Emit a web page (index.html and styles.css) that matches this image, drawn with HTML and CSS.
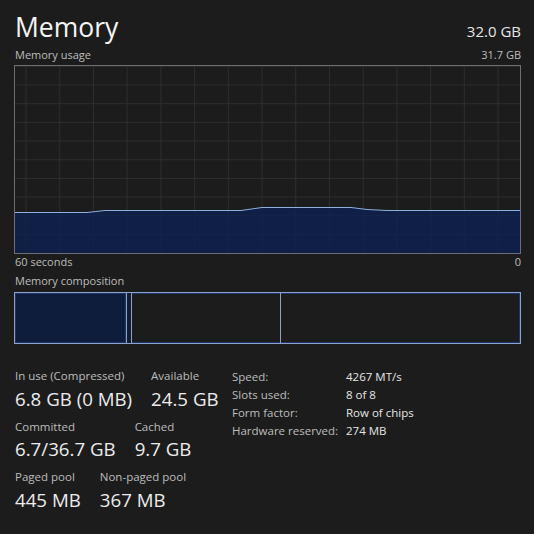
FILE: index.html
```html
<!DOCTYPE html>
<html>
<head>
<meta charset="utf-8">
<link rel="stylesheet" href="styles.css">
</head>
<body>
<div class="page">
  <div class="header">
    <div class="title">Memory</div>
    <div class="total">32.0 GB</div>
  </div>
  <div class="caption">
    <span>Memory usage</span>
    <span>31.7 GB</span>
  </div>
  <div class="graph">
    <svg class="chart" viewBox="0 0 505 187" preserveAspectRatio="none" width="505" height="187">
      <polygon class="area" points="0,146.5 72,146.5 90,144.5 226,144.5 247,141.5 336,141.5 352,143.5 372,144.5 505,144.5 505,187 0,187"/>
      <polyline class="line" points="0,146.5 72,146.5 90,144.5 226,144.5 247,141.5 336,141.5 352,143.5 372,144.5 505,144.5"/>
    </svg>
  </div>
  <div class="caption axis">
    <span>60 seconds</span>
    <span>0</span>
  </div>
  <div class="caption comp-title">
    <span>Memory composition</span>
  </div>
  <div class="composition">
    <div class="seg inuse"></div>
    <div class="seg modified"></div>
    <div class="seg standby"></div>
    <div class="seg free"></div>
  </div>
  <div class="stats">
    <div class="left">
      <div class="row">
        <div class="stat"><div class="label">In use (Compressed)</div><div class="value">6.8 GB (0 MB)</div></div>
        <div class="stat"><div class="label">Available</div><div class="value">24.5 GB</div></div>
      </div>
      <div class="row">
        <div class="stat"><div class="label">Committed</div><div class="value">6.7/36.7 GB</div></div>
        <div class="stat"><div class="label">Cached</div><div class="value">9.7 GB</div></div>
      </div>
      <div class="row">
        <div class="stat"><div class="label">Paged pool</div><div class="value">445 MB</div></div>
        <div class="stat"><div class="label">Non-paged pool</div><div class="value">367 MB</div></div>
      </div>
    </div>
    <div class="right">
      <div class="k">Speed:</div><div class="v">4267 MT/s</div>
      <div class="k">Slots used:</div><div class="v">8 of 8</div>
      <div class="k">Form factor:</div><div class="v">Row of chips</div>
      <div class="k">Hardware reserved:</div><div class="v">274 MB</div>
    </div>
  </div>
</div>
</body>
</html>
```
FILE: styles.css
```css
html, body {
  margin: 0;
  padding: 0;
  background: #1c1c1c;
}
body {
  width: 534px;
  height: 534px;
  overflow: hidden;
  font-family: "Segoe UI", "Open Sans", sans-serif;
  color: #e8e8e8;
}
.page {
  padding: 9px 13px 0 14px;
}
.header {
  display: flex;
  justify-content: space-between;
  align-items: baseline;
  height: 36px;
}
.title {
  font-size: 26.5px;
  line-height: 36px;
  color: #f4f4f4;
  padding-left: 1px;
}
.total {
  font-size: 15px;
  line-height: 36px;
  color: #e6e6e6;
}
.caption {
  display: flex;
  justify-content: space-between;
  font-size: 11px;
  line-height: 16px;
  color: #bdbdbd;
  margin-top: 2px;
  padding-left: 1px;
}
.graph {
  margin-top: 2px;
  width: 505px;
  height: 187px;
  border: 1px solid #6e6e6e;
  background-color: #1c1c1c;
  background-image:
    linear-gradient(to right, #2d2d2d 1px, transparent 1px),
    linear-gradient(to bottom, #2d2d2d 1px, transparent 1px);
  background-size: 33.73px 100%, 100% 18.7px;
  background-position: 10.5px 0, 0 18.5px;
}
.chart {
  display: block;
}
.area {
  fill: #0d2150;
  fill-opacity: 0.8;
}
.line {
  fill: none;
  stroke: #8db0dc;
  stroke-width: 1;
}
.axis {
  margin-top: 0;
}
.comp-title {
  margin-top: 3px;
}
.composition {
  margin-top: 3px;
  height: 50px;
  border: 1px solid #8ca3c6;
  box-shadow: inset 0 0 0 1px #1d3470;
  display: flex;
}
.seg {
  height: 100%;
  box-sizing: border-box;
}
.inuse {
  width: 111px;
  background: #0f1d3c;
  box-shadow: inset 0 0 0 1px #1c3470;
}
.modified {
  width: 6px;
  border-left: 1px solid #8ca3c6;
  border-right: 1px solid #8ca3c6;
  background: #141d30;
}
.standby {
  width: 148px;
}
.free {
  flex: 1;
  border-left: 1px solid #8ca3c6;
}
.stats {
  display: flex;
  margin-top: 24px;
  padding-left: 1px;
}
.left {
  width: 217px;
}
.row {
  display: flex;
  gap: 19px;
  margin-bottom: 8px;
}
.label {
  font-size: 11.5px;
  line-height: 16px;
  color: #bdbdbd;
}
.value {
  font-size: 18.7px;
  line-height: 24px;
  margin-top: 2.5px;
  color: #ececec;
}
.right {
  display: grid;
  grid-template-columns: 114px auto;
  grid-auto-rows: 18px;
  font-size: 11.5px;
  line-height: 18px;
  margin-top: 0;
}
.k {
  color: #bdbdbd;
}
.v {
  color: #e6e6e6;
}
```
